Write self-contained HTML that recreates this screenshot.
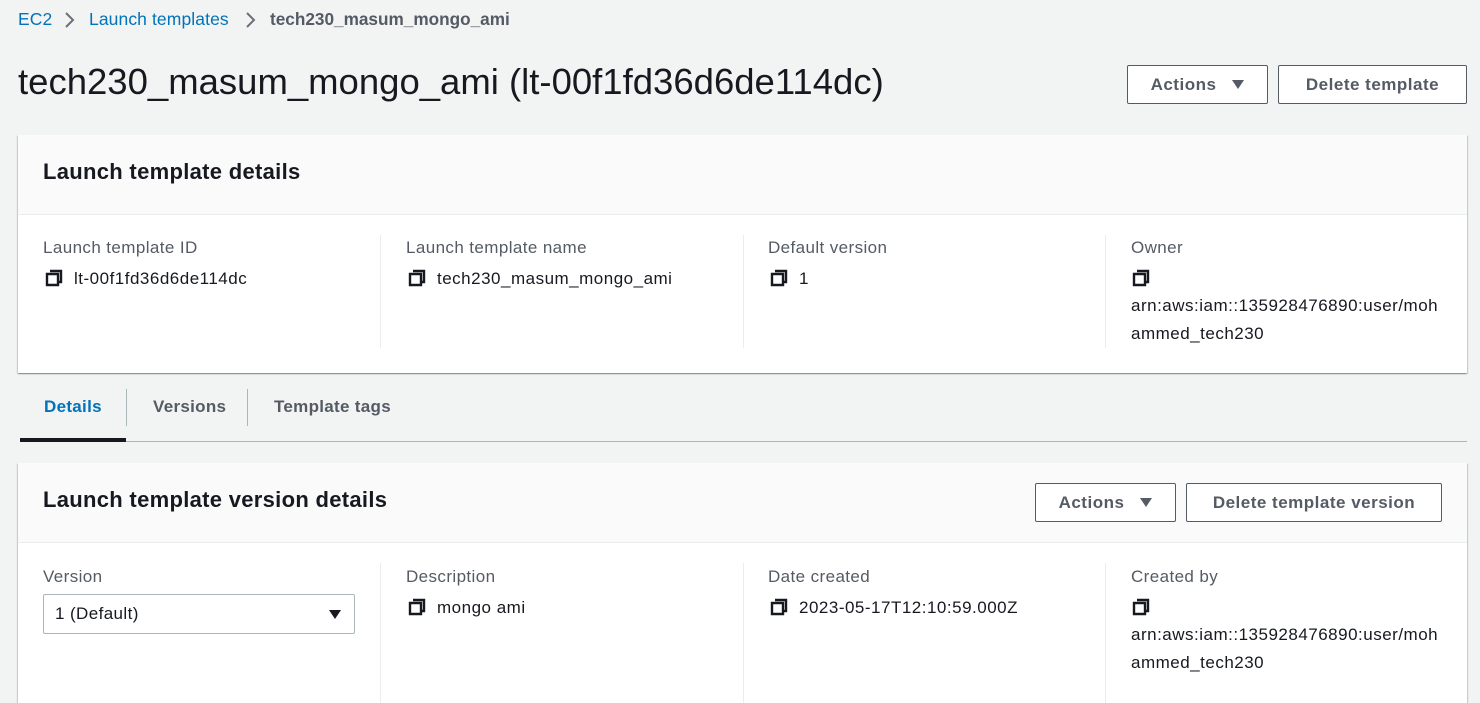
<!DOCTYPE html>
<html><head><style>
*{margin:0;padding:0;box-sizing:border-box}
body{width:1480px;height:668px;overflow:hidden;background:#f2f3f3;font-family:"Liberation Sans",sans-serif;color:#16191f;position:relative}
.a{position:absolute;white-space:nowrap}
.bc{top:9px;font-size:17.5px;letter-spacing:.1px}
.link{color:#0073bb}
.btn{position:absolute;border:1px solid #545b64;border-radius:2px;background:#fff;font-weight:bold;font-size:17px;letter-spacing:.5px;color:#545b64;display:flex;align-items:center;justify-content:center;gap:16px}
.panel{position:absolute;left:18px;width:1449px;background:#fff;box-shadow:0 1px 1px rgba(0,28,36,.3),1px 1px 1px rgba(0,28,36,.15),-1px 1px 1px rgba(0,28,36,.15)}
.ph{position:absolute;left:0;top:0;width:100%;height:80px;background:#fafafa;border-bottom:1px solid #eaeded}
.ph h2{position:absolute;left:25px;top:24px;font-size:22px;letter-spacing:.3px;font-weight:bold}
.lbl{font-size:17px;letter-spacing:.4px;color:#545b64}
.val{font-size:17px;letter-spacing:.5px;color:#16191f}
.div{position:absolute;width:1px;background:#eaeded}
.ci{display:inline-block;vertical-align:-3px;margin-right:11px}
.tri{width:0;height:0;border-left:6px solid transparent;border-right:6px solid transparent;border-top:9px solid #545b64}
.tab{position:absolute;top:397px;font-size:17px;letter-spacing:.3px;font-weight:bold;color:#545b64}
</style></head><body>
<svg width="0" height="0" style="position:absolute"><defs><symbol id="cp" viewBox="0 0 18 18"><path d="M5 2h11v11h-3M2 5h11v11H2z" fill="none" stroke="#16191f" stroke-width="2.4"/></symbol></defs></svg>

<div class="a bc link" style="left:18px">EC2</div>
<svg class="a" style="left:63px;top:11px" width="12" height="18" viewBox="0 0 12 18"><path d="M3 2l7 7-7 7" fill="none" stroke="#687078" stroke-width="2"/></svg>
<div class="a bc link" style="left:89px">Launch templates</div>
<svg class="a" style="left:244px;top:11px" width="12" height="18" viewBox="0 0 12 18"><path d="M3 2l7 7-7 7" fill="none" stroke="#687078" stroke-width="2"/></svg>
<div class="a bc" style="left:270px;color:#545b64;font-weight:bold;letter-spacing:0;font-size:17.2px">tech230_masum_mongo_ami</div>

<div class="a" style="left:18px;top:61px;font-size:36.5px">tech230_masum_mongo_ami (lt-00f1fd36d6de114dc)</div>
<div class="btn" style="left:1127px;top:65px;width:141px;height:39px">Actions <span class="tri"></span></div>
<div class="btn" style="left:1278px;top:65px;width:189px;height:39px">Delete template</div>

<div class="panel" style="top:135px;height:238px">
<div class="ph"><h2>Launch template details</h2></div>
<div class="div" style="left:362px;top:100px;height:113px"></div>
<div class="div" style="left:725px;top:100px;height:113px"></div>
<div class="div" style="left:1087px;top:100px;height:113px"></div>
<div class="a lbl" style="left:25px;top:103px">Launch template ID</div>
<div class="a val" style="left:27px;top:134px"><svg class="ci" width="18" height="18"><use href="#cp"/></svg>lt-00f1fd36d6de114dc</div>
<div class="a lbl" style="left:388px;top:103px">Launch template name</div>
<div class="a val" style="left:390px;top:134px"><svg class="ci" width="18" height="18"><use href="#cp"/></svg>tech230_masum_mongo_ami</div>
<div class="a lbl" style="left:750px;top:103px">Default version</div>
<div class="a val" style="left:752px;top:134px"><svg class="ci" width="18" height="18"><use href="#cp"/></svg>1</div>
<div class="a lbl" style="left:1113px;top:103px">Owner</div>
<div class="a val" style="left:1114px;top:134px"><svg class="ci" width="18" height="18"><use href="#cp"/></svg></div>
<div class="a val" style="left:1113px;top:157px;line-height:28px">arn:aws:iam::135928476890:user/moh<br>ammed_tech230</div>
</div>

<div class="a" style="left:20px;top:441px;width:1447px;height:1px;background:#aab7b8"></div>
<div class="a" style="left:20px;top:438px;width:106px;height:4px;background:#16191f"></div>
<div class="tab" style="left:44px;color:#0073bb">Details</div>
<div class="a" style="left:126px;top:389px;width:1px;height:37px;background:#aab7b8"></div>
<div class="tab" style="left:153px">Versions</div>
<div class="a" style="left:247px;top:389px;width:1px;height:37px;background:#aab7b8"></div>
<div class="tab" style="left:274px">Template tags</div>

<div class="panel" style="top:463px;height:240px">
<div class="ph"><h2>Launch template version details</h2></div>
<div class="btn" style="left:1017px;top:20px;width:141px;height:39px">Actions <span class="tri"></span></div>
<div class="btn" style="left:1168px;top:20px;width:256px;height:39px">Delete template version</div>
<div class="div" style="left:362px;top:100px;height:140px"></div>
<div class="div" style="left:725px;top:100px;height:140px"></div>
<div class="div" style="left:1087px;top:100px;height:140px"></div>
<div class="a lbl" style="left:25px;top:104px">Version</div>
<div class="a" style="left:25px;top:131px;width:312px;height:40px;border:1px solid #aab7b8;border-radius:2px;font-size:17px;letter-spacing:.4px;padding:9px 11px">1 (Default)<span class="tri" style="position:absolute;right:13px;top:15px;border-top-color:#16191f"></span></div>
<div class="a lbl" style="left:388px;top:104px">Description</div>
<div class="a val" style="left:390px;top:135px"><svg class="ci" width="18" height="18"><use href="#cp"/></svg>mongo ami</div>
<div class="a lbl" style="left:750px;top:104px">Date created</div>
<div class="a val" style="left:752px;top:135px"><svg class="ci" width="18" height="18"><use href="#cp"/></svg>2023-05-17T12:10:59.000Z</div>
<div class="a lbl" style="left:1113px;top:104px">Created by</div>
<div class="a val" style="left:1114px;top:135px"><svg class="ci" width="18" height="18"><use href="#cp"/></svg></div>
<div class="a val" style="left:1113px;top:158px;line-height:28px">arn:aws:iam::135928476890:user/moh<br>ammed_tech230</div>
</div>
</body></html>
